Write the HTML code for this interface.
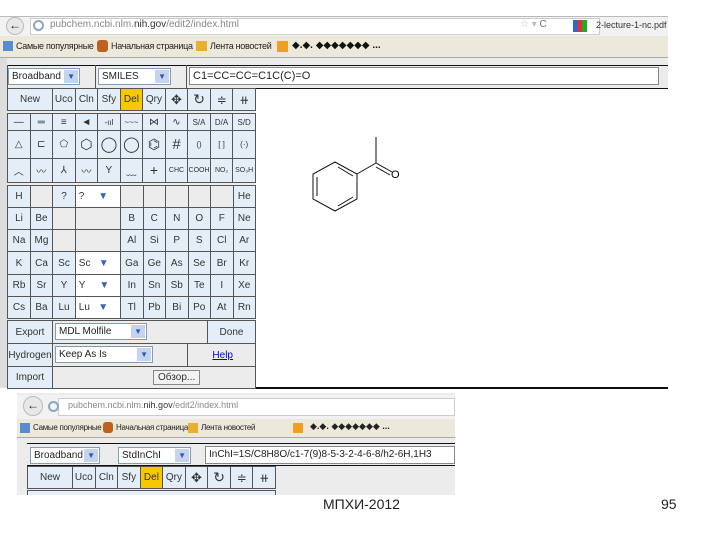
<!DOCTYPE html>
<html><head><meta charset="utf-8"><style>
*{margin:0;padding:0;box-sizing:border-box}
body{width:720px;height:540px;background:#fff;position:relative;overflow:hidden;font-family:"Liberation Sans","DejaVu Sans",sans-serif;color:#222}
.a{position:absolute}
table{border-collapse:collapse;table-layout:fixed;position:absolute}
td{border:1px solid #555;background:#e4eef8;text-align:center;font-size:10px;color:#333;padding:0;overflow:hidden;white-space:nowrap}
td.e{background:#ececec}
td.y{background:#f6c800}
td.w{background:#fff}
.sel{position:absolute;background:#fff;border:1px solid #7f9db9;font-size:10px;padding-left:3px;line-height:15px;height:17px;color:#222;overflow:hidden;white-space:nowrap}
.sel:after{content:"";position:absolute;right:1px;top:1px;width:14px;height:13px;background:#c4d4ee}
.sel b{position:absolute;right:4px;top:0;font-size:8px;color:#3355aa;z-index:1;font-weight:normal}
.bm{position:absolute;font-size:9px;letter-spacing:-0.3px;color:#222;white-space:nowrap}
</style></head><body>

<div class="a" style="left:0;top:16px;width:668px;height:20px;background:#f2f2f2;border-top:1px solid #bbb"></div>
<div class="a" style="left:30px;top:18px;width:570px;height:17px;background:#fff;border:1px solid #ccc"></div>
<div class="a" style="left:6px;top:17px;width:18px;height:18px;border-radius:50%;background:#e8e8e8;border:1px solid #bbb;font-size:12px;line-height:15px;text-align:center">&#8592;</div>
<div class="a" style="left:33px;top:20px;width:11px;height:11px;border-radius:50%;border:2px solid #8aa6c8"></div>
<div class="a" style="left:50px;top:19px;font-size:10px;color:#888">pubchem.ncbi.nlm.<span style="color:#333">nih.gov</span>/edit2/index.html</div>
<div class="a" style="left:520px;top:19px;font-size:10px;color:#bbb">☆ ▾ <span style="color:#777">C</span></div>
<div class="a" style="left:573px;top:20px;width:14px;height:12px;background:linear-gradient(90deg,#2a6ad0 33%,#d33 33%,#d33 66%,#2a2 66%)"></div>
<div class="a" style="left:596px;top:20px;font-size:9px;color:#333">2-lecture-1-nc.pdf</div>
<div class="a" style="left:0;top:36px;width:668px;height:22px;background:#ece9da;border-bottom:1px solid #aaa"></div>
<div class="a" style="left:3px;top:41px;width:10px;height:10px;background:#5a8ad0"></div>
<div class="bm" style="left:16px;top:41px">Самые популярные</div>
<div class="a" style="left:97px;top:40px;width:11px;height:12px;background:#c06020;border-radius:3px"></div>
<div class="bm" style="left:111px;top:41px">Начальная страница</div>
<div class="a" style="left:196px;top:41px;width:11px;height:10px;background:#e8b030"></div>
<div class="bm" style="left:210px;top:41px">Лента новостей</div>
<div class="a" style="left:277px;top:41px;width:11px;height:11px;background:#f0a020"></div>
<div class="a" style="left:292px;top:40px;font-size:10px;color:#111;font-weight:bold">◆.◆. ◆◆◆◆◆◆◆ ...</div>
<div class="a" style="left:0;top:58px;width:668px;height:330px;background:#ececec"></div>
<div class="a" style="left:0;top:58px;width:7px;height:330px;background:#ddd"></div>

<div class="a" style="left:7px;top:65px;width:661px;height:1px;background:#111"></div>
<div class="a" style="left:7px;top:88px;width:661px;height:1px;background:#111"></div>
<div class="a" style="left:7px;top:65px;width:1px;height:24px;background:#555"></div>
<div class="a" style="left:95px;top:65px;width:1px;height:24px;background:#555"></div>
<div class="a" style="left:186px;top:65px;width:1px;height:24px;background:#555"></div>
<div class="sel" style="left:8px;top:68px;width:72px">Broadband<b>▼</b></div>
<div class="sel" style="left:98px;top:68px;width:73px">SMILES<b>▼</b></div>
<div class="a" style="left:189px;top:67px;width:470px;height:18px;background:#fff;border:1px solid #888;font-size:11px;padding-left:3px;line-height:16px">C1=CC=CC=C1C(C)=O</div>

<div class="a" style="left:256px;top:89px;width:412px;height:299px;background:#fff"></div>
<div class="a" style="left:256px;top:387px;width:412px;height:2px;background:#111"></div>
<svg class="a" style="left:256px;top:89px" width="412" height="299">
<g stroke="#111" stroke-width="1" fill="none" transform="translate(-256,-89)">
<polygon points="335,162 357,174 357,199 335,211 313,199 313,174"/>
<line x1="338" y1="167" x2="353" y2="176"/><line x1="353" y1="197" x2="338" y2="206"/><line x1="317" y1="177" x2="317" y2="196"/>
<line x1="357" y1="174" x2="376" y2="163"/><line x1="376" y1="163" x2="376" y2="137"/>
<line x1="376" y1="163" x2="392" y2="172"/><line x1="376" y1="167" x2="390" y2="175"/>
</g>
<text x="135" y="89" font-size="11" font-family="Liberation Sans">O</text>
</svg>

<table style="left:7px;top:88px;width:249px;height:23px"><tr>
<td style="width:45px">New</td><td>Uco</td><td>Cln</td><td>Sfy</td><td class="y">Del</td><td>Qry</td><td style="font-size:13px">✥</td><td style="font-size:14px">↻</td><td style="font-size:12px">≑</td><td style="font-size:12px">⧺</td></tr></table>

<table style="left:7px;top:113px;width:249px;height:70px"><tr>
<td>—</td><td style="font-weight:bold">═</td><td>≡</td><td>◄</td><td style="font-size:8px">-ııl</td><td style="font-size:8px">~~~</td><td>⋈</td><td>∿</td><td style="font-size:8px">S/A</td><td style="font-size:8px">D/A</td><td style="font-size:8px">S/D</td></tr><tr>
<td>△</td><td>⊏</td><td>⬠</td><td style="font-size:14px">⬡</td><td style="font-size:15px">◯</td><td style="font-size:15px">◯</td><td style="font-size:14px">⌬</td><td style="font-size:15px">#</td><td style="font-size:8px">()</td><td style="font-size:8px">[ ]</td><td style="font-size:8px">(·)</td></tr><tr>
<td>︿</td><td>〰</td><td>⅄</td><td>〰</td><td>Y</td><td>﹏</td><td style="font-size:14px">+</td><td style="font-size:7px">CHC</td><td style="font-size:7px">COOH</td><td style="font-size:7px">NO₂</td><td style="font-size:7px">SO₃H</td></tr></table>

<table style="left:7px;top:185px;width:249px;height:134px">
<colgroup><col style="width:23px"><col style="width:22px"><col style="width:23px"><col style="width:45px"><col><col><col><col><col><col></colgroup>
<tr><td>H</td><td class="e"></td><td>?</td><td class="w" style="text-align:left">&nbsp;?&nbsp;&nbsp;&nbsp;&nbsp;&nbsp;<span style="color:#36a">▼</span></td><td class="e"></td><td class="e"></td><td class="e"></td><td class="e"></td><td class="e"></td><td>He</td></tr>
<tr><td>Li</td><td>Be</td><td class="e"></td><td class="e"></td><td>B</td><td>C</td><td>N</td><td>O</td><td>F</td><td>Ne</td></tr>
<tr><td>Na</td><td>Mg</td><td class="e"></td><td class="e"></td><td>Al</td><td>Si</td><td>P</td><td>S</td><td>Cl</td><td>Ar</td></tr>
<tr><td>K</td><td>Ca</td><td>Sc</td><td class="w" style="text-align:left">&nbsp;Sc&nbsp;&nbsp;&nbsp;<span style="color:#36a">▼</span></td><td>Ga</td><td>Ge</td><td>As</td><td>Se</td><td>Br</td><td>Kr</td></tr>
<tr><td>Rb</td><td>Sr</td><td>Y</td><td class="w" style="text-align:left">&nbsp;Y&nbsp;&nbsp;&nbsp;&nbsp;&nbsp;<span style="color:#36a">▼</span></td><td>In</td><td>Sn</td><td>Sb</td><td>Te</td><td>I</td><td>Xe</td></tr>
<tr><td>Cs</td><td>Ba</td><td>Lu</td><td class="w" style="text-align:left">&nbsp;Lu&nbsp;&nbsp;&nbsp;<span style="color:#36a">▼</span></td><td>Tl</td><td>Pb</td><td>Bi</td><td>Po</td><td>At</td><td>Rn</td></tr>
</table>

<table style="left:7px;top:320px;width:249px;height:68px">
<colgroup><col style="width:45px"><col style="width:135px"><col style="width:20px"><col></colgroup>
<tr style="height:23px"><td>Export</td><td class="e" colspan="2" style="text-align:left;position:relative"><span class="sel" style="left:2px;top:2px;width:92px">MDL Molfile<b>▼</b></span></td><td>Done</td></tr>
<tr style="height:23px"><td>Hydrogen</td><td class="e" style="text-align:left;position:relative"><span class="sel" style="left:2px;top:2px;width:98px">Keep As Is<b>▼</b></span></td><td class="e" colspan="2" style="color:#00c;text-decoration:underline;text-align:right;padding-right:22px">Help</td></tr>
<tr style="height:22px"><td>Import</td><td class="e" colspan="3" style="text-align:left;padding-left:100px"><span style="background:#f2f2f2;border:1px solid #888;padding:1px 4px">Обзор...</span></td></tr>
</table>

<div class="a" style="left:17px;top:393px;width:438px;height:102px;background:#ececec"></div>
<div class="a" style="left:17px;top:395px;width:438px;height:24px;background:#f2f2f2"></div>
<div class="a" style="left:58px;top:398px;width:397px;height:18px;background:#fff;border:1px solid #ccc"></div>
<div class="a" style="left:23px;top:396px;width:20px;height:20px;border-radius:50%;background:#e8e8e8;border:1px solid #bbb;font-size:12px;line-height:17px;text-align:center">&#8592;</div>
<div class="a" style="left:48px;top:401px;width:11px;height:11px;border-radius:50%;border:2px solid #8aa6c8"></div>
<div class="a" style="left:68px;top:400px;font-size:9px;color:#888">pubchem.ncbi.nlm.<span style="color:#333">nih.gov</span>/edit2/index.html</div>
<div class="a" style="left:17px;top:419px;width:438px;height:19px;background:#ece9da;border-bottom:1px solid #aaa"></div>
<div class="a" style="left:20px;top:423px;width:10px;height:10px;background:#5a8ad0"></div>
<div class="bm" style="left:33px;top:423px;font-size:8px">Самые популярные</div>
<div class="a" style="left:103px;top:422px;width:10px;height:11px;background:#c06020;border-radius:3px"></div>
<div class="bm" style="left:116px;top:423px;font-size:8px">Начальная страница</div>
<div class="a" style="left:188px;top:423px;width:10px;height:10px;background:#e8b030"></div>
<div class="bm" style="left:201px;top:423px;font-size:8px">Лента новостей</div>
<div class="a" style="left:293px;top:423px;width:10px;height:10px;background:#f0a020"></div>
<div class="a" style="left:310px;top:421px;font-size:9px;font-weight:bold">◆.◆. ◆◆◆◆◆◆◆ ...</div>
<div class="a" style="left:27px;top:443px;width:428px;height:1px;background:#111"></div>
<div class="a" style="left:27px;top:465px;width:428px;height:1px;background:#111"></div>
<div class="sel" style="left:30px;top:447px;width:70px">Broadband<b>▼</b></div>
<div class="sel" style="left:118px;top:447px;width:73px">StdInChI<b>▼</b></div>
<div class="a" style="left:205px;top:446px;width:250px;height:18px;background:#fff;border:1px solid #888;font-size:10px;padding-left:3px;line-height:16px;white-space:nowrap;overflow:hidden">InChI=1S/C8H8O/c1-7(9)8-5-3-2-4-6-8/h2-6H,1H3</div>
<table style="left:27px;top:466px;width:249px;height:23px"><tr>
<td style="width:45px">New</td><td>Uco</td><td>Cln</td><td>Sfy</td><td class="y">Del</td><td>Qry</td><td style="font-size:13px">✥</td><td style="font-size:14px">↻</td><td style="font-size:12px">≑</td><td style="font-size:12px">⧺</td></tr></table>
<div class="a" style="left:27px;top:490px;width:249px;height:5px;border:1px solid #555;border-bottom:none;background:#e4eef8"></div>

<div class="a" style="left:323px;top:496px;font-size:14px;color:#222">МПХИ-2012</div>
<div class="a" style="left:661px;top:496px;font-size:14px;color:#222">95</div>
</body></html>
